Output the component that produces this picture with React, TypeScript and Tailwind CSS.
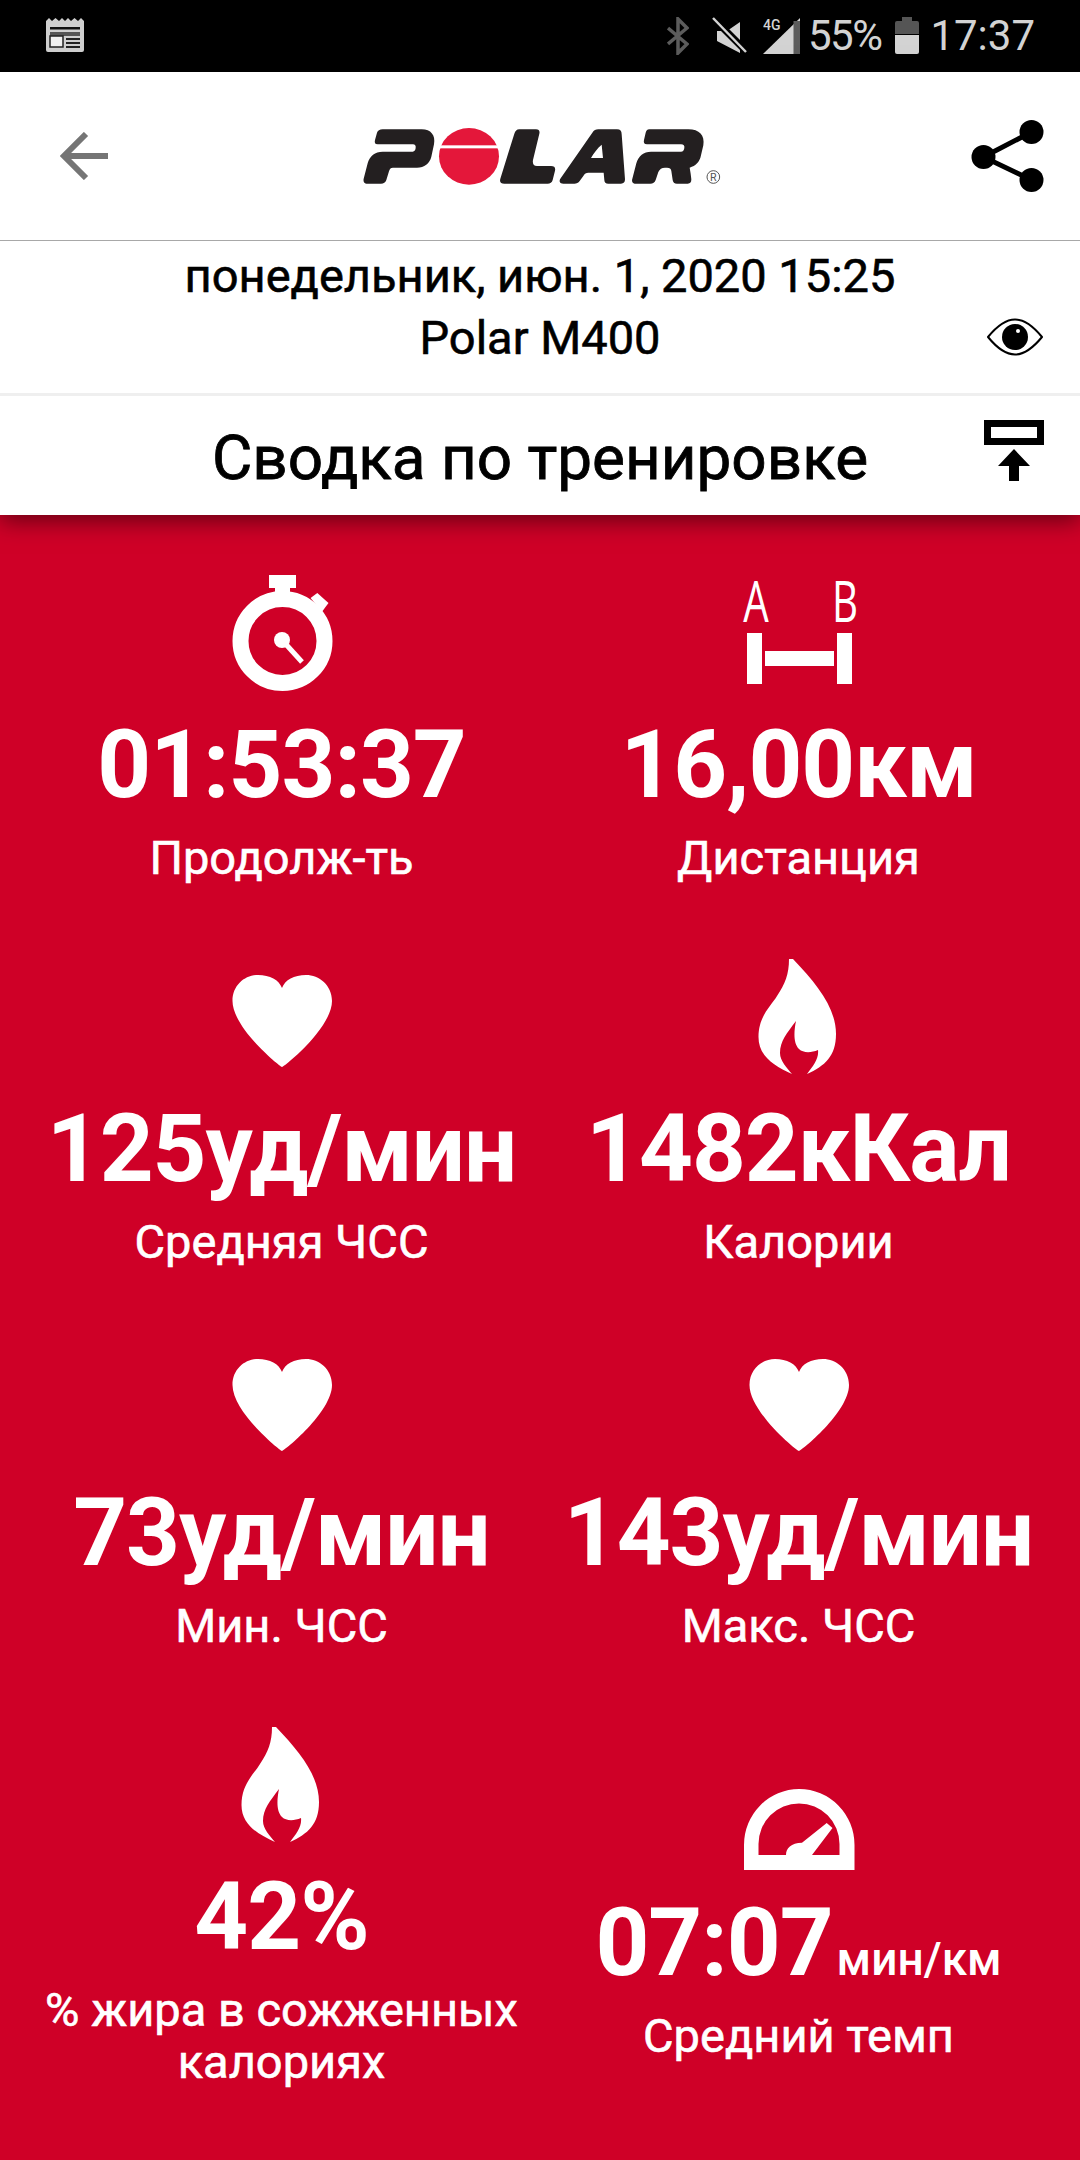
import React from "react";

const Heart = () => (
  <svg width="120" height="120" viewBox="0 0 120 120" fill="#fff">
    <path d="M60 111C58 111 10.500 72 10.500 45C10.500 29 23 19 36 19C48 19 57 24 60 32C63 24 72 19 84 19C97 19 110 29 110 45C110 72 62 111 60 111Z" />
  </svg>
);

const Flame = () => (
  <svg width="120" height="120" viewBox="0 0 120 120" fill="#fff">
    <path d="M50 3L54 3C78 28 97 52 97 78C97 100 86 110 68 118C74 110 80 103 79 94C72 97 64 97 60 93C54 87 55 75 57 65C48 77 41 85 41 97C41 105 48 112 53 118C35 110 19.5 100 19.5 81C19.5 60 32 50 38 40C46 28 50 18 50 3Z" />
  </svg>
);

const Stopwatch = () => (
  <svg width="120" height="120" viewBox="0 0 120 120" fill="#fff">
    <circle cx="60.500" cy="69" r="42" fill="none" stroke="#fff" strokeWidth="16" />
    <rect x="47" y="3" width="27" height="13" />
    <rect x="53" y="16" width="15" height="8" />
    <polygon points="88.6,26 95.3,21 106.5,31 99.8,40" />
    <circle cx="60" cy="68" r="8" />
    <line x1="60" y1="68" x2="80" y2="90" stroke="#fff" strokeWidth="5" />
  </svg>
);

const Distance = () => (
  <svg className="-mt-[30px]" width="120" height="150" viewBox="0 -30 120 150" fill="#fff">
    <text x="22" y="50" fontSize="56" textAnchor="middle" transform="translate(17 0) scale(0.72 1) translate(-22 0)" fontFamily="'Open Sans',sans-serif">A</text>
    <text x="22" y="50" fontSize="56" textAnchor="middle" transform="translate(106 0) scale(0.72 1) translate(-22 0)" fontFamily="'Open Sans',sans-serif">B</text>
    <rect x="8" y="61" width="15" height="51" />
    <rect x="98" y="61" width="15" height="51" />
    <rect x="26" y="79" width="69" height="15" />
  </svg>
);

const Gauge = () => (
  <svg width="120" height="120" viewBox="0 0 120 120" fill="#fff">
    <path fillRule="evenodd" d="M5 120V95A55.25 56 0 0 1 115.5 95V120ZM19.5 105V94A40.5 40.5 0 0 1 100.5 94V105Z" />
    <path d="M47 105C47 98 52 93 63 92.7L87.7 73L93.5 78L73 105Z" />
  </svg>
);

const Logo = () => (
  <svg width="380" height="80" viewBox="0 0 1140 240">
    <g fill="#231f20">
      <path d="M95 40H212C240 40 254 58 249 85L241 122C236 142 220 155 198 155H126C118 155 116 160 114 166L106 192C103 200 98 203 90 203H50C40 203 36 197 38 188L50 142C56 120 72 107 95 107H185C191 107 193 102 194 96C195 89 192 85 186 85H80C72 85 70 80 72 72L78 50C80 44 86 40 95 40Z" />
      <path d="M505 40H555C564 40 567 45 565 53L546 132C544 144 548 150 558 150H600C610 150 614 155 612 164L605 192C603 200 597 203 590 203H460C450 203 445 198 448 188L490 53C493 45 497 40 505 40Z" />
      <path fillRule="evenodd" d="M742 40H798C808 40 812 45 812 55L822 190C822 199 818 203 810 203H772C764 203 760 199 760 192L758 170H712C705 170 701 173 697 180L686 195C682 201 677 203 670 203H637C626 203 623 196 629 187L724 50C729 43 734 40 742 40ZM720 126H756L752 86C738 98 728 112 720 126Z" />
      <path d="M895 40H1012C1045 40 1062 58 1057 88L1050 118C1046 138 1034 150 1016 155C1018 166 1020 178 1021 190C1021 199 1018 203 1010 203H978C970 203 966 199 965 192L961 165C960 158 956 155 948 155H942C932 155 926 159 922 168L914 192C911 200 906 203 898 203H855C846 203 841 197 844 188L856 142C862 120 878 107 900 107H990C996 107 999 103 1000 96C1001 89 998 85 990 85H888C880 85 877 80 879 72L884 50C886 44 888 40 895 40Z" />
    </g>
    <ellipse cx="354" cy="121" rx="90" ry="85" fill="#e4173a" />
    <rect x="260" y="88" width="190" height="9" fill="#fff" />
    <circle cx="1087" cy="183" r="19" fill="none" stroke="#555" strokeWidth="3" />
    <text x="1087" y="195" fontSize="32" textAnchor="middle" fill="#555" fontFamily="Roboto,sans-serif">R</text>
  </svg>
);

type Tile = { icon: React.ReactNode; value: string; unit?: string; label: string[] };

const tiles: Tile[] = [
  { icon: <Stopwatch />, value: "01:53:37", label: ["Продолж-ть"] },
  { icon: <Distance />, value: "16,00км", label: ["Дистанция"] },
  { icon: <Heart />, value: "125уд/мин", label: ["Средняя ЧСС"] },
  { icon: <Flame />, value: "1482кКал", label: ["Калории"] },
  { icon: <Heart />, value: "73уд/мин", label: ["Мин. ЧСС"] },
  { icon: <Heart />, value: "143уд/мин", label: ["Макс. ЧСС"] },
  { icon: <Flame />, value: "42%", label: ["% жира в сожженных", "калориях"] },
  { icon: <Gauge />, value: "07:07", unit: "мин/км", label: ["Средний темп"] },
];

export default function App() {
  return (
    <div className="w-[1080px] h-[2160px] overflow-hidden flex flex-col bg-[#cf0027] [font-family:Roboto,sans-serif]">
      <div className="h-[72px] bg-black flex items-center justify-between pl-[46px] pr-[45px] text-[#d3d3d3]">
        <svg width="38" height="36" viewBox="0 0 38 36">
          <path d="M0 3L3 0L6 3L9.500 0L13 3L16 0L19 3L22 0L25 3L28.500 0L32 3L35 0L38 3V32Q38 34 36 34H2Q0 34 0 32Z" fill="#cfcfcf" />
          <rect x="4" y="9" width="30" height="2.500" fill="#111" />
          <rect x="4" y="14" width="30" height="4" fill="#555" />
          <rect x="4" y="18" width="13" height="11" fill="#f0f0f0" stroke="#222" strokeWidth="1.500" />
          <rect x="20" y="20" width="14" height="2" fill="#222" />
          <rect x="20" y="24" width="14" height="2" fill="#222" />
          <rect x="20" y="28" width="14" height="2" fill="#222" />
        </svg>
        <div className="flex items-center">
          <svg width="22" height="38" viewBox="0 0 22 38" fill="none" stroke="#5c5c5c" strokeWidth="3.500">
            <path d="M1 11L20 27L11 36V2L20 11L1 27" />
          </svg>
          <svg className="ml-[23px]" width="36" height="38" viewBox="0 0 36 38">
            <path d="M5 14H15L28 5V36L5 24Z" fill="#d3d3d3" />
            <path d="M1 1L35 35" stroke="#000" strokeWidth="7" />
            <path d="M1 1L34 35" stroke="#d3d3d3" strokeWidth="2.500" />
          </svg>
          <svg className="ml-[15px]" width="38" height="38" viewBox="0 0 38 38">
            <path d="M0 37L37 1V37Z" fill="#d3d3d3" />
            <rect x="30.500" y="4" width="6.500" height="33" fill="#5c5c5c" />
            <text x="0" y="13" fontSize="14" fontWeight="500" fill="#d3d3d3" fontFamily="Roboto,sans-serif">4G</text>
          </svg>
          <span className="ml-[7px] text-[42px] leading-[72px] tracking-[-1.5px]">55%</span>
          <svg className="ml-[14px]" width="24" height="38" viewBox="0 0 24 38">
            <path d="M7 0H17V4H22Q24 4 24 6V17H0V6Q0 4 2 4H7Z" fill="#555" />
            <path d="M0 18H24V35Q24 37 22 37H2Q0 37 0 35Z" fill="#d3d3d3" />
          </svg>
          <span className="ml-[11px] text-[42px] leading-[72px]">17:37</span>
        </div>
      </div>

      <div className="relative z-10 bg-white shadow-[0_6px_22px_rgba(0,0,0,0.5)]">
        <div className="h-[169px] flex items-center justify-between pl-[60px] pr-[36px] border-b border-[#a8a8a8]">
          <svg width="50" height="48" viewBox="0 0 50 48" fill="none" stroke="#757575" strokeWidth="6">
            <path d="M26 2L4 24L26 46" />
            <path d="M4 24H48" />
          </svg>
          <Logo />
          <svg width="73" height="74" viewBox="0 0 73 74" fill="#000">
            <circle cx="60.500" cy="13" r="12" />
            <circle cx="12.500" cy="38" r="12" />
            <circle cx="60.500" cy="61" r="12" />
            <path d="M60.500 13L12.500 38L60.500 61" fill="none" stroke="#000" strokeWidth="5" />
          </svg>
        </div>
        <div className="relative h-[155px] pt-[4px] border-b-[3px] border-[#efefef] text-center text-black text-[47px] leading-[62px] [-webkit-text-stroke:0.6px_#000]">
          <div>понедельник, июн. 1, 2020 15:25</div>
          <div>Polar M400</div>
          <svg className="absolute left-[987px] top-[77px]" width="56" height="38" viewBox="0 0 56 38">
            <path d="M1 19C10 8 18 1.500 28 1.500C38 1.500 46 8 55 19C46 30 38 36.500 28 36.500C18 36.500 10 30 1 19Z" fill="none" stroke="#000" strokeWidth="2" />
            <circle cx="28" cy="19" r="13" fill="#000" />
            <circle cx="31" cy="13" r="2" fill="#fff" />
          </svg>
        </div>
        <div className="relative h-[119px] pt-[4px] flex items-center justify-center text-black text-[62px] [-webkit-text-stroke:0.8px_#000]">
          <span>Сводка по тренировке</span>
          <svg className="absolute left-[984px] top-[24px]" width="60" height="61" viewBox="0 0 60 61" fill="#000">
            <path fillRule="evenodd" d="M0 0H60V25H0ZM7 7V18H53V7Z" />
            <path d="M30 29L46 46H35V61H25V46H14Z" />
          </svg>
        </div>
      </div>

      <div className="flex-1 pt-[57px] px-[23px]">
        <div className="grid grid-cols-2 gap-y-[72px] items-center text-white">
          {tiles.map((t, i) => (
            <div key={i} className="flex flex-col items-center">
              {t.icon}
              <div className="mt-[18px] h-[110px] flex items-baseline text-[94px] tracking-[-1px] leading-[110px] font-bold whitespace-nowrap">
                {t.value}
                {t.unit && <span className="text-[46px] tracking-normal font-medium ml-[4px]">{t.unit}</span>}
              </div>
              <div className="mt-[12px] text-[47px] leading-[52px] text-center whitespace-nowrap [-webkit-text-stroke:0.6px_#fff]">
                {t.label.map((l) => (
                  <div key={l}>{l}</div>
                ))}
              </div>
            </div>
          ))}
        </div>
      </div>
    </div>
  );
}
